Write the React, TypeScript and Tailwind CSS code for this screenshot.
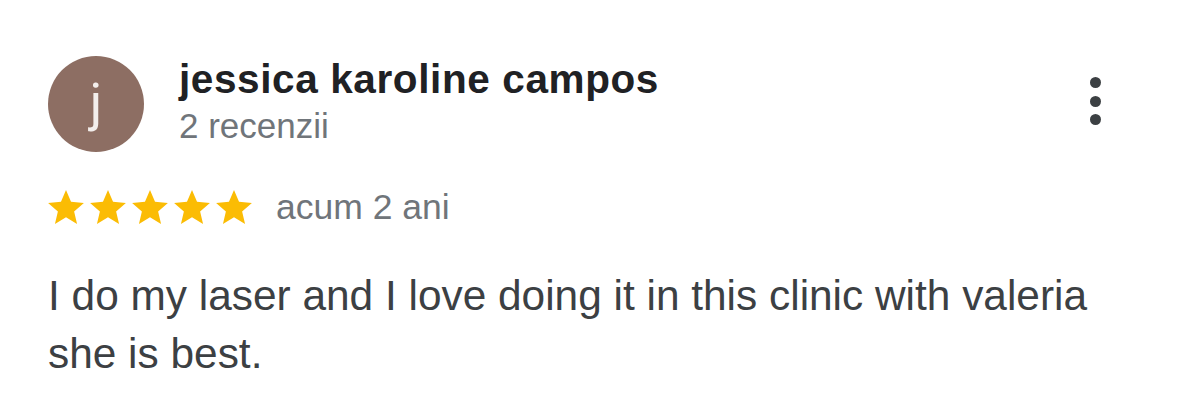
const font = { fontFamily: '"Liberation Sans", Arial, Helvetica, sans-serif' };

function Star() {
  return (
    <svg width="36" height="34" viewBox="2 2 20 19" className="shrink-0">
      <path
        fill="#fbbc04"
        d="M12 17.27L18.18 21l-1.64-7.03L22 9.24l-7.19-.61L12 2 9.19 8.63 2 9.24l5.46 4.73L5.82 21z"
      />
    </svg>
  );
}

export default function App() {
  return (
    <main className="min-h-[412px] w-full bg-white pl-[48px] pr-[78px] pt-[56px]" style={font}>
      <div className="flex items-start">
        <div className="flex h-[96px] w-[96px] shrink-0 items-center justify-center rounded-full bg-[#8d6e63]">
          <span
            className="pb-[2px] text-[52px] font-normal leading-none text-[#f3eeec]"
            style={{ fontFamily: 'Roboto, "Liberation Sans", sans-serif' }}
          >
            j
          </span>
        </div>
        <div className="ml-[35px] flex flex-col">
          <h1 className="text-[40.5px] font-bold leading-[46px] tracking-[0.015em] text-[#202124]">
            jessica karoline campos
          </h1>
          <p className="text-[35px] leading-[48px] text-[#70757a]">2 recenzii</p>
        </div>
        <button className="ml-auto mt-[21px] flex flex-col gap-[7.5px] p-0" aria-label="Mai multe">
          <span className="h-[11px] w-[11px] rounded-full bg-[#3c4043]" />
          <span className="h-[11px] w-[11px] rounded-full bg-[#3c4043]" />
          <span className="h-[11px] w-[11px] rounded-full bg-[#3c4043]" />
        </button>
      </div>

      <div className="mt-[35px] flex items-center">
        <div className="flex gap-[6px]">
          <Star />
          <Star />
          <Star />
          <Star />
          <Star />
        </div>
        <span className="ml-[24px] text-[35.5px] leading-[40px] text-[#70757a]">acum 2 ani</span>
      </div>

      <p className="mt-[40px] max-w-[1060px] text-[42.4px] leading-[58px] text-[#3c4043]">
        I do my laser and I love doing it in this clinic with valeria she is best.
      </p>
    </main>
  );
}
